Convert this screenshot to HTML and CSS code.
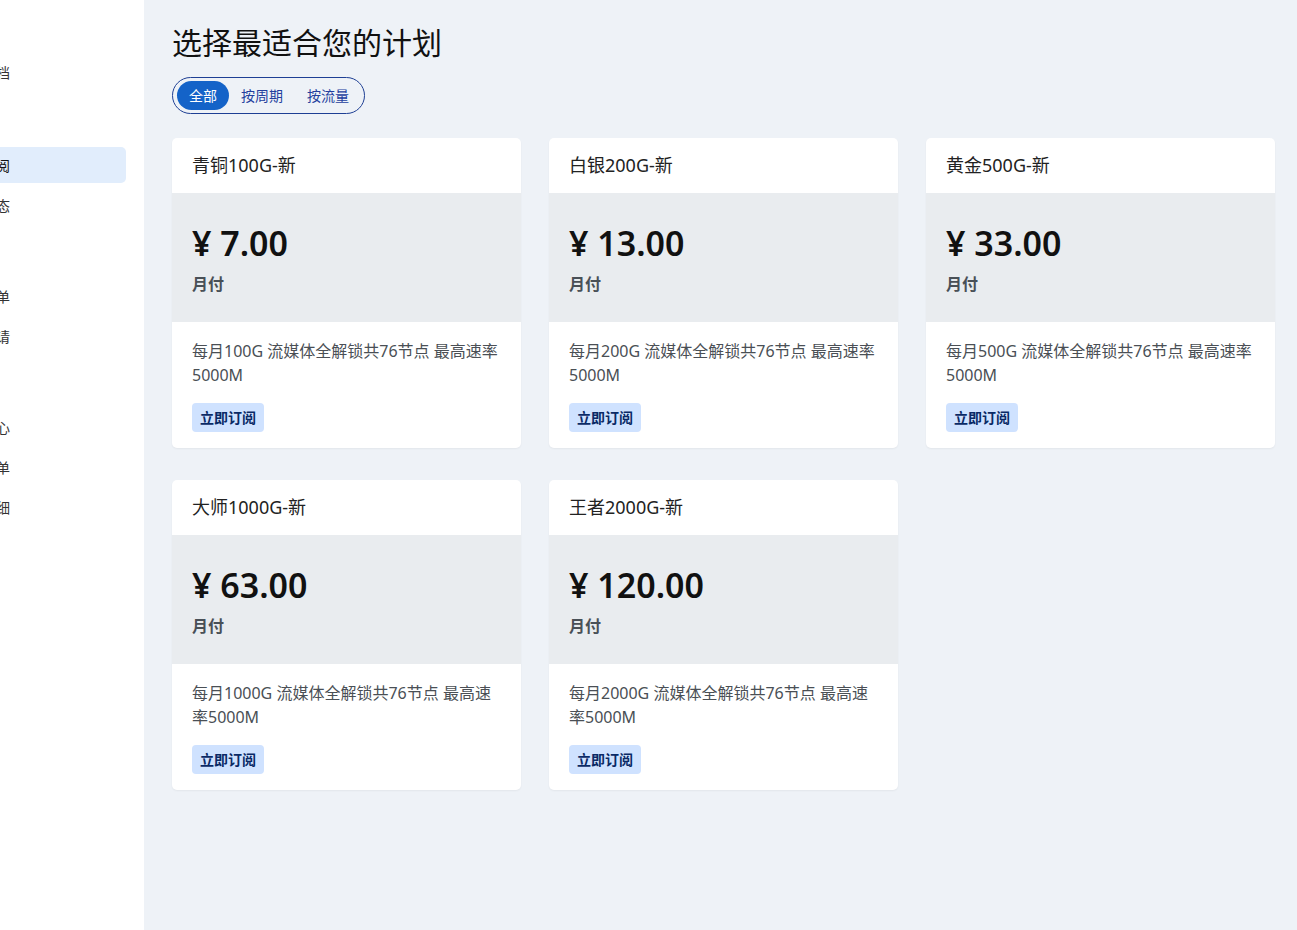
FILE: index.html
```html
<!DOCTYPE html>
<html lang="zh-CN">
<head>
    <meta charset="UTF-8">
    <meta name="viewport" content="width=device-width, initial-scale=1.0">
    <title>购买订阅</title>
    <link rel="stylesheet" href="styles.css">
</head>
<body>
    <div class="layout">
        <aside class="sidebar">
            <nav class="nav">
                <a class="nav-item">仪表盘</a>
                <a class="nav-item">使用文档</a>
                <div class="nav-title first">订阅</div>
                <a class="nav-item active">购买订阅</a>
                <a class="nav-item">节点状态</a>
                <div class="nav-title">财务</div>
                <a class="nav-item">我的订单</a>
                <a class="nav-item">我的邀请</a>
                <div class="nav-title">用户</div>
                <a class="nav-item">个人中心</a>
                <a class="nav-item">我的工单</a>
                <a class="nav-item">流量明细</a>
            </nav>
        </aside>

        <main class="content">
            <h1 class="page-title">选择最适合您的计划</h1>
            <div class="filter">
                <button class="filter-btn active">全部</button>
                <button class="filter-btn">按周期</button>
                <button class="filter-btn">按流量</button>
            </div>

            <div class="plans">
                <div class="plan">
                    <div class="plan-head">青铜100G-新</div>
                    <div class="plan-price">
                        <div class="price">¥ 7.00</div>
                        <div class="period">月付</div>
                    </div>
                    <div class="plan-body">
                        <p class="desc">每月100G 流媒体全解锁共76节点 最高速率5000M</p>
                        <button class="buy">立即订阅</button>
                    </div>
                </div>
                <div class="plan">
                    <div class="plan-head">白银200G-新</div>
                    <div class="plan-price">
                        <div class="price">¥ 13.00</div>
                        <div class="period">月付</div>
                    </div>
                    <div class="plan-body">
                        <p class="desc">每月200G 流媒体全解锁共76节点 最高速率5000M</p>
                        <button class="buy">立即订阅</button>
                    </div>
                </div>
                <div class="plan">
                    <div class="plan-head">黄金500G-新</div>
                    <div class="plan-price">
                        <div class="price">¥ 33.00</div>
                        <div class="period">月付</div>
                    </div>
                    <div class="plan-body">
                        <p class="desc">每月500G 流媒体全解锁共76节点 最高速率5000M</p>
                        <button class="buy">立即订阅</button>
                    </div>
                </div>
                <div class="plan">
                    <div class="plan-head">大师1000G-新</div>
                    <div class="plan-price">
                        <div class="price">¥ 63.00</div>
                        <div class="period">月付</div>
                    </div>
                    <div class="plan-body">
                        <p class="desc">每月1000G 流媒体全解锁共76节点 最高速率5000M</p>
                        <button class="buy">立即订阅</button>
                    </div>
                </div>
                <div class="plan">
                    <div class="plan-head">王者2000G-新</div>
                    <div class="plan-price">
                        <div class="price">¥ 120.00</div>
                        <div class="period">月付</div>
                    </div>
                    <div class="plan-body">
                        <p class="desc">每月2000G 流媒体全解锁共76节点 最高速率5000M</p>
                        <button class="buy">立即订阅</button>
                    </div>
                </div>
            </div>
        </main>
    </div>
</body>
</html>
```

FILE: styles.css
```css
* {
    box-sizing: border-box;
}
body {
    margin: 0;
    font-family: "Noto Sans", "Noto Sans CJK SC", sans-serif;
    color: #212529;
    background: #eef2f7;
}
.layout {
    display: flex;
    min-height: 930px;
}

/* sidebar (scrolled out to the left) */
.sidebar {
    width: 144px;
    flex-shrink: 0;
    background: #fff;
    overflow: hidden;
}
.nav {
    display: flex;
    flex-direction: column;
    gap: 4px;
    margin-left: -46px;
    margin-right: 18px;
    padding-top: 14px;
}
.nav-item {
    display: flex;
    align-items: center;
    height: 36px;
    font-size: 14px;
    color: #333;
    border-radius: 0 5px 5px 0;
    white-space: nowrap;
}
.nav-item.active {
    background: #e1edfc;
    color: #111;
}
.nav-title {
    height: 47px;
    font-size: 12px;
    color: #999;
    display: flex;
    align-items: flex-end;
    padding-bottom: 4px;
}
.nav-title.first {
    height: 49px;
}

/* main */
.content {
    flex: 1;
    padding: 25px 22px 40px 28px;
}
.page-title {
    margin: 0;
    font-size: 30px;
    line-height: 36px;
    font-weight: 400;
    color: #111;
}
.filter {
    display: inline-flex;
    margin-top: 16px;
    padding: 3px 3px 3px 4px;
    border: 1px solid #1e3f94;
    border-radius: 20px;
}
.filter-btn {
    font-family: inherit;
    font-size: 14px;
    line-height: 19px;
    padding: 5px 12px;
    border: none;
    border-radius: 15px;
    background: transparent;
    color: #243f9e;
    cursor: pointer;
}
.filter-btn.active {
    background: #1463c8;
    color: #fff;
}

.plans {
    display: grid;
    grid-template-columns: repeat(3, 349px);
    column-gap: 28px;
    row-gap: 32px;
    margin-top: 24px;
}
.plan {
    background: #fff;
    border-radius: 5px;
    overflow: hidden;
    box-shadow: 0 1px 2px rgba(0, 0, 0, 0.05);
}
.plan-head {
    padding: 16px 20px;
    font-size: 18px;
    line-height: 23px;
    color: #222;
}
.plan-price {
    background: #e9ecef;
    padding: 30px 20px 26px;
}
.price {
    font-size: 34px;
    line-height: 41px;
    font-weight: 600;
    color: #111;
}
.period {
    margin-top: 8px;
    font-size: 16px;
    line-height: 24px;
    font-weight: 700;
    color: #495057;
}
.plan-body {
    padding: 17px 20px 16px;
}
.desc {
    margin: 0;
    font-size: 16px;
    line-height: 24px;
    color: #4a4f55;
}
.buy {
    display: block;
    height: 29px;
    margin-top: 16px;
    font-family: inherit;
    font-size: 14px;
    line-height: 19px;
    font-weight: 700;
    padding: 5px 8px;
    border: none;
    border-radius: 4px;
    background: #cfe2ff;
    color: #0a2a66;
    cursor: pointer;
}
```
